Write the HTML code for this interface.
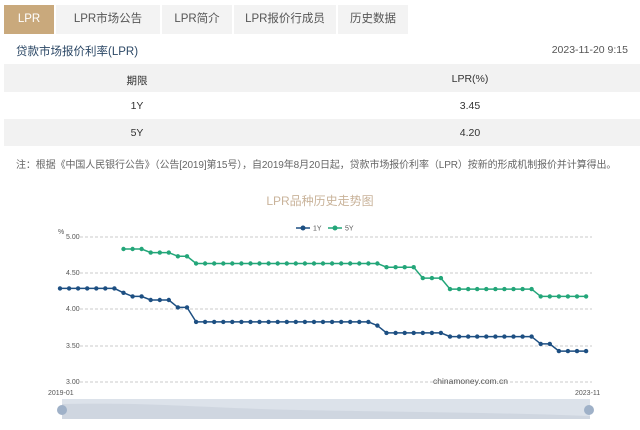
<!DOCTYPE html>
<html><head><meta charset="utf-8"><style>
body{margin:0;width:640px;height:430px;background:#fff;font-family:"Liberation Sans","Noto Sans CJK SC",sans-serif;position:relative;overflow:hidden}
.tab{position:absolute;top:5px;height:29px;line-height:29px;background:#f3f3f3;color:#555;font-size:11.5px;text-align:center}
.abs{position:absolute}
</style></head><body>
<div class="tab" style="left:4px;width:50px;background:#c9a97c;color:#fff">LPR</div>
<div class="tab" style="left:56px;width:104px">LPR市场公告</div>
<div class="tab" style="left:162px;width:70px">LPR简介</div>
<div class="tab" style="left:234px;width:102px">LPR报价行成员</div>
<div class="tab" style="left:338px;width:70px">历史数据</div>
<div class="abs" style="left:16px;top:43px;font-size:11.5px;color:#2c4866">贷款市场报价利率(LPR)</div>
<div class="abs" style="right:12px;top:44px;font-size:10.5px;color:#555">2023-11-20 9:15</div>
<div class="abs" style="left:4px;top:64px;width:636px;height:28px;background:#f2f2f2"></div>
<div class="abs" style="left:4px;top:119px;width:636px;height:27px;background:#f2f2f2"></div>
<div class="abs" style="left:117px;top:73px;width:40px;text-align:center;font-size:10.5px;color:#333">期限</div>
<div class="abs" style="left:440px;top:73px;width:60px;text-align:center;font-size:10.5px;color:#333">LPR(%)</div>
<div class="abs" style="left:117px;top:100px;width:40px;text-align:center;font-size:10.5px;color:#333">1Y</div>
<div class="abs" style="left:440px;top:100px;width:60px;text-align:center;font-size:10.5px;color:#333">3.45</div>
<div class="abs" style="left:117px;top:127px;width:40px;text-align:center;font-size:10.5px;color:#333">5Y</div>
<div class="abs" style="left:440px;top:127px;width:60px;text-align:center;font-size:10.5px;color:#333">4.20</div>
<div class="abs" style="left:16px;top:156px;font-size:10px;color:#666;white-space:nowrap;letter-spacing:-0.1px">注：根据《中国人民银行公告》（公告[2019]第15号），自2019年8月20日起，贷款市场报价利率（LPR）按新的形成机制报价并计算得出。</div>
<svg class="abs" style="left:0;top:0" width="640" height="430">
<text x="320" y="205" font-size="12" fill="#c9b39a" text-anchor="middle">LPR品种历史走势图</text>
<g font-size="7" fill="#555">
<line x1="296" y1="228" x2="310" y2="228" stroke="#1d4f82" stroke-width="1.5"/><circle cx="303" cy="228" r="2.5" fill="#1d4f82"/><text x="313" y="230.5">1Y</text>
<line x1="328" y1="228" x2="342" y2="228" stroke="#23a679" stroke-width="1.5"/><circle cx="335" cy="228" r="2.5" fill="#23a679"/><text x="345" y="230.5">5Y</text>
<text x="58" y="234">%</text>
<text x="66" y="239">5.00</text><text x="66" y="275">4.50</text><text x="66" y="311">4.00</text><text x="66" y="348">3.50</text><text x="66" y="384">3.00</text>
<text x="48" y="395">2019-01</text><text x="575" y="395">2023-11</text>
</g>
<g stroke="#bbb" stroke-dasharray="3,2" stroke-width="0.7">
<line x1="80" y1="237" x2="592" y2="237"/><line x1="80" y1="273" x2="592" y2="273"/><line x1="80" y1="309" x2="592" y2="309"/><line x1="80" y1="346" x2="592" y2="346"/><line x1="80" y1="382" x2="592" y2="382"/>
</g>
<text x="433" y="384" font-size="8.5" fill="#555">chinamoney.com.cn</text>
<rect x="62" y="399" width="528" height="20" fill="#dce2ea"/>
<path d="M62 404 C150 402 200 408 300 410 S480 412 590 416 L590 419 L62 419Z" fill="#cfd6e0"/>
<circle cx="62" cy="410" r="5" fill="#9fb1c8"/><circle cx="589" cy="410" r="5" fill="#9fb1c8"/>
<g id="s"></g>
</svg>
<script>
var y1=[],y5=[];
function f(a,v,n){for(var i=0;i<n;i++)a.push(v)}
f(y1,4.31,7);f(y1,4.25,1);f(y1,4.20,2);f(y1,4.15,3);f(y1,4.05,2);f(y1,3.85,20);f(y1,3.80,1);f(y1,3.70,7);f(y1,3.65,10);f(y1,3.55,2);f(y1,3.45,4);
f(y5,null,7);f(y5,4.85,3);f(y5,4.80,3);f(y5,4.75,2);f(y5,4.65,21);f(y5,4.60,4);f(y5,4.45,3);f(y5,4.30,10);f(y5,4.20,6);
var g=document.getElementById('s'),h='';
function draw(a,c){var p=[],d='';for(var i=0;i<a.length;i++){if(a[i]==null)continue;var x=60+i*9.07,y=384-(a[i]-3)*73;p.push(x.toFixed(1)+','+y.toFixed(1));d+='<circle cx="'+x.toFixed(1)+'" cy="'+y.toFixed(1)+'" r="2.2" fill="'+c+'"/>';}
h+='<polyline fill="none" stroke="'+c+'" stroke-width="1.5" points="'+p.join(' ')+'"/>'+d;}
draw(y5,'#23a679');draw(y1,'#1d4f82');g.innerHTML=h;
</script>
</body></html>
